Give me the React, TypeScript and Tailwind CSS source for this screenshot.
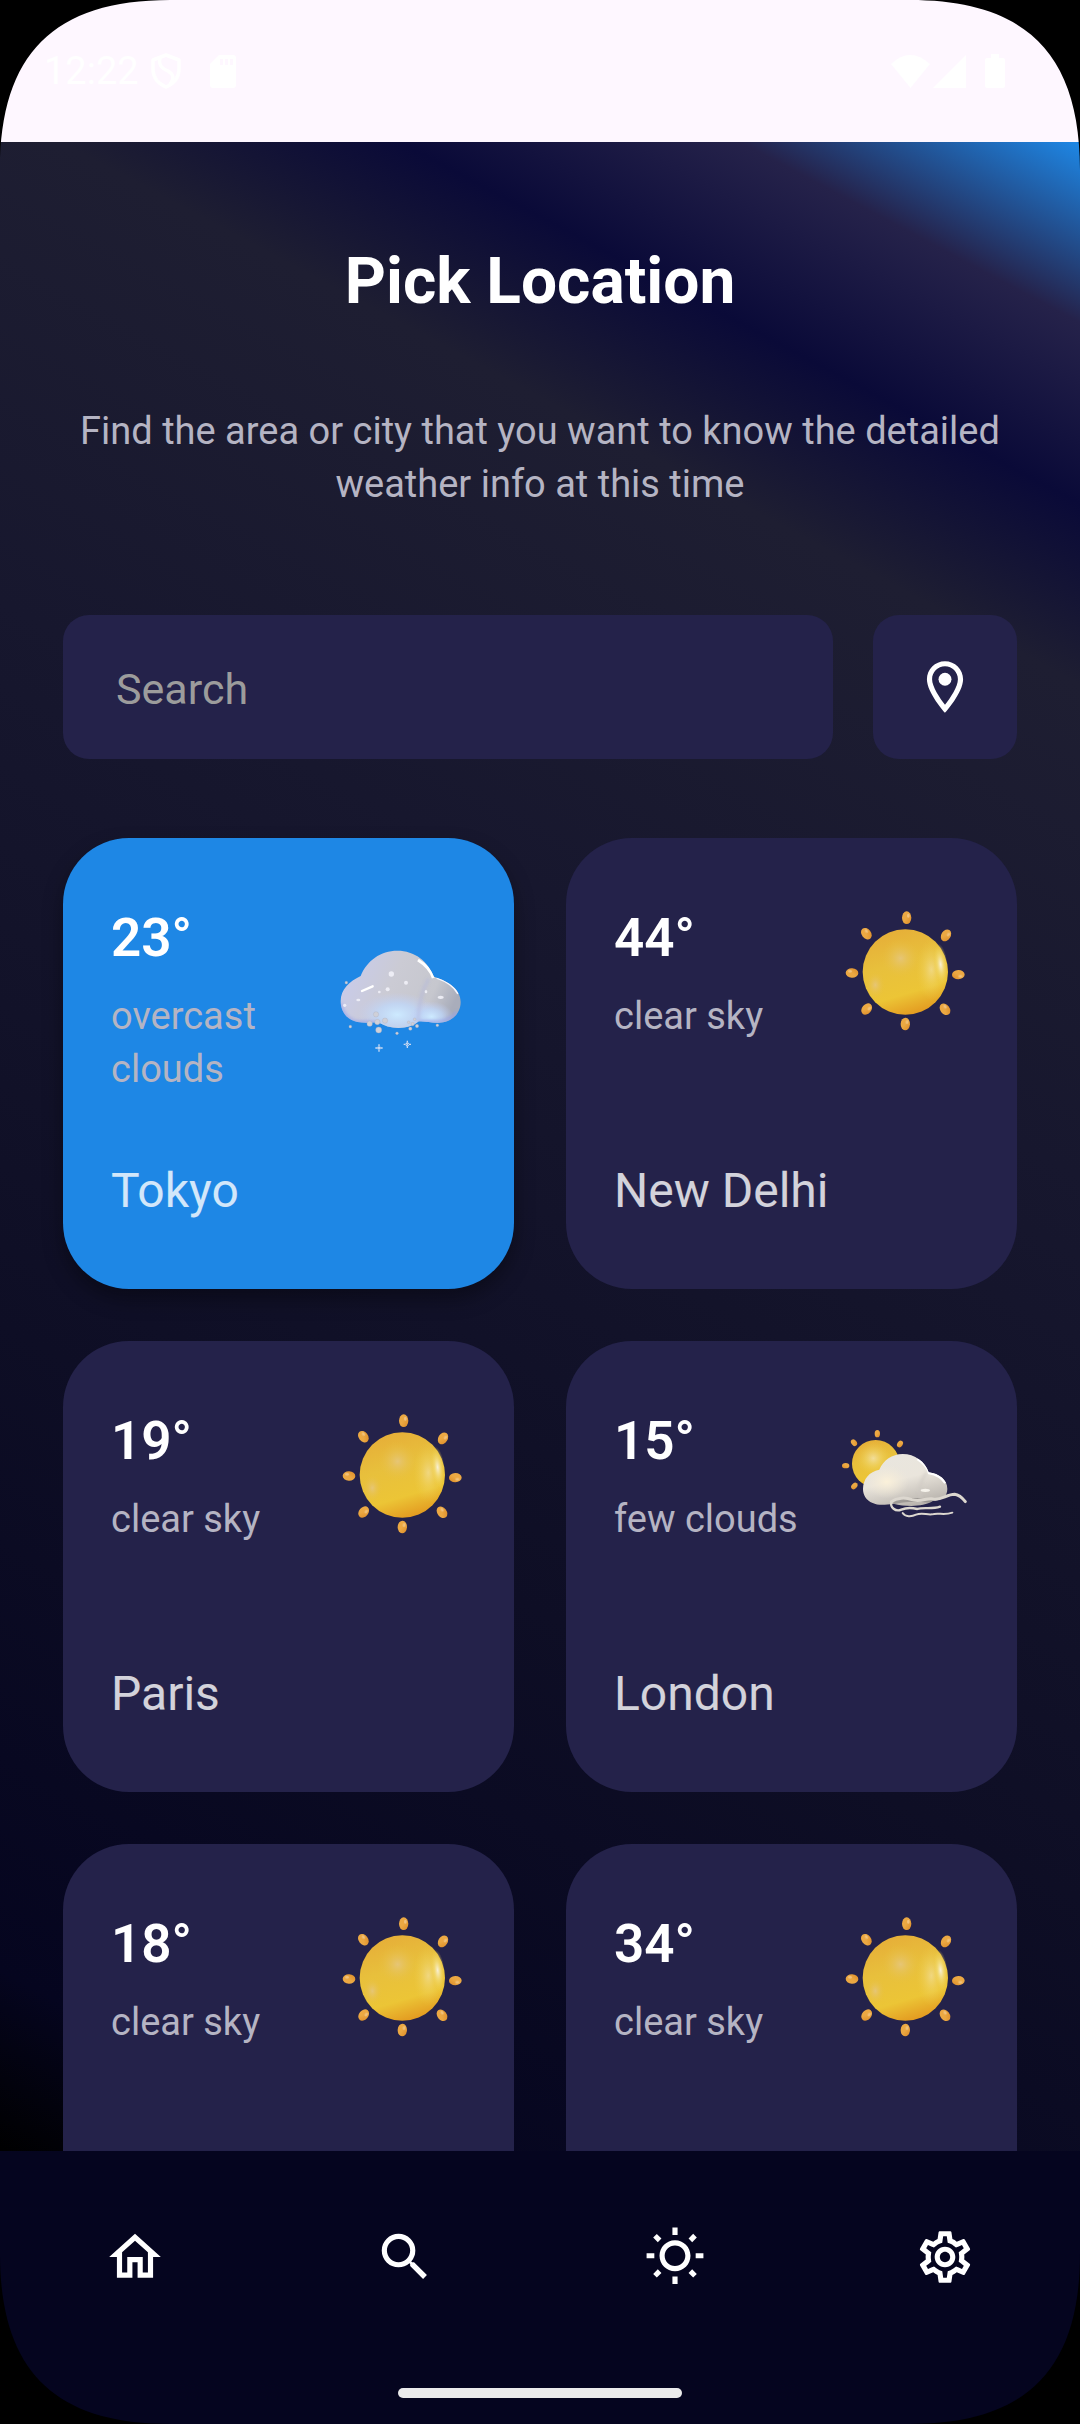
import React, { useState } from "react";
import {
  MdOutlineHome,
  MdOutlineLocationOn,
  MdOutlineSettings,
  MdOutlineWbSunny,
  MdSearch,
} from "react-icons/md";

type Sky = "snow" | "sun" | "partly";

interface Place {
  id: string;
  temp: string;
  summary: string;
  city: string;
  sky: Sky;
}

const places: Place[] = [
  { id: "tokyo", temp: "23°", summary: "overcast clouds", city: "Tokyo", sky: "snow" },
  { id: "delhi", temp: "44°", summary: "clear sky", city: "New Delhi", sky: "sun" },
  { id: "paris", temp: "19°", summary: "clear sky", city: "Paris", sky: "sun" },
  { id: "london", temp: "15°", summary: "few clouds", city: "London", sky: "partly" },
  { id: "fifth", temp: "18°", summary: "clear sky", city: "", sky: "sun" },
  { id: "sixth", temp: "34°", summary: "clear sky", city: "", sky: "sun" },
];

function GradientDefs() {
  return (
    <svg className="absolute size-0" aria-hidden="true">
      <defs>
        <linearGradient id="sunBase" x1="0.3" y1="0" x2="0.6" y2="1">
          <stop offset="0" stopColor="#e6ae38" />
          <stop offset="0.4" stopColor="#e8c03c" />
          <stop offset="0.75" stopColor="#ecc536" />
          <stop offset="1" stopColor="#e39a20" />
        </linearGradient>
        <radialGradient id="sunShine">
          <stop offset="0" stopColor="#f8f0d6" />
          <stop offset="0.45" stopColor="#f3dc7a" stopOpacity="0.75" />
          <stop offset="1" stopColor="#efcf4a" stopOpacity="0" />
        </radialGradient>
        <radialGradient id="sunGlow">
          <stop offset="0" stopColor="#e6c67c" stopOpacity="0.9" />
          <stop offset="1" stopColor="#e8c03c" stopOpacity="0" />
        </radialGradient>
        <linearGradient id="ray" x1="0" y1="0" x2="1" y2="1">
          <stop offset="0" stopColor="#eda944" />
          <stop offset="0.5" stopColor="#eba842" />
          <stop offset="1" stopColor="#dc8a26" />
        </linearGradient>
        <linearGradient id="snowCloud" x1="0" y1="0.2" x2="1" y2="0.5">
          <stop offset="0" stopColor="#c8cbee" />
          <stop offset="0.45" stopColor="#cbcbd4" />
          <stop offset="0.8" stopColor="#c6c7ce" />
          <stop offset="1" stopColor="#a9adbb" />
        </linearGradient>
        <radialGradient id="snowGlow">
          <stop offset="0" stopColor="#cdeaff" />
          <stop offset="0.5" stopColor="#bfd8fb" stopOpacity="0.75" />
          <stop offset="1" stopColor="#c3cdf5" stopOpacity="0" />
        </radialGradient>
        <linearGradient id="palePuff" x1="0.2" y1="0" x2="0.6" y2="1">
          <stop offset="0" stopColor="#e9e6df" />
          <stop offset="0.5" stopColor="#eae5dc" />
          <stop offset="1" stopColor="#b9b4ae" />
        </linearGradient>
        <radialGradient id="paleWarm">
          <stop offset="0" stopColor="#fbf1da" />
          <stop offset="1" stopColor="#f2ead8" stopOpacity="0" />
        </radialGradient>
        <filter id="soften" x="-50%" y="-50%" width="200%" height="200%">
          <feGaussianBlur stdDeviation="2" />
        </filter>
        <filter id="diffuse" x="-100%" y="-100%" width="300%" height="300%">
          <feGaussianBlur stdDeviation="5" />
        </filter>
      </defs>
    </svg>
  );
}

const sunRays = [
  [230, 68, 0],
  [109, 116, -38],
  [348, 121, 32],
  [66, 234, -88],
  [385, 239, 88],
  [110, 342, 40],
  [345, 343, -38],
  [226, 387, 3],
];

function SunIcon() {
  return (
    <svg viewBox="27 39 390 390" className="size-[130px] shrink-0" aria-hidden="true">
      {sunRays.map(([x, y, angle]) => (
        <g key={`${x}-${y}`} transform={`translate(${x} ${y}) rotate(${angle})`}>
          <ellipse rx="14" ry="19" fill="url(#ray)" />
          <ellipse cx="5" cy="-6" rx="4" ry="6" fill="#f2c27c" filter="url(#soften)" />
        </g>
      ))}
      <circle cx="226" cy="231" r="128" fill="url(#sunBase)" />
      <ellipse cx="212" cy="190" rx="60" ry="60" fill="url(#sunGlow)" />
      <ellipse cx="136" cy="270" rx="30" ry="42" fill="url(#sunGlow)" />
      <ellipse cx="304" cy="224" rx="46" ry="92" fill="url(#sunShine)" opacity="0.45" />
      <ellipse cx="332" cy="208" rx="21" ry="62" fill="url(#sunShine)" transform="rotate(-6 332 208)" />
    </svg>
  );
}

const flakes = [
  [79, 188, 4],
  [168, 283, 8],
  [149, 311, 8],
  [172, 306, 8],
  [195, 302, 8],
  [176, 330, 9],
  [91, 320, 4],
  [231, 340, 4],
  [266, 307, 4],
  [278, 312, 5],
  [284, 298, 4],
  [271, 326, 5],
  [291, 318, 5],
  [352, 316, 4],
];

const sparkles = [
  [214, 162, 8, 8],
  [258, 188, 6, 6],
  [203, 208, 6, 6],
  [318, 215, 4, 5],
  [362, 232, 9, 5],
  [115, 240, 6, 4],
  [74, 256, 5, 5],
  [178, 216, 4, 4],
];

const snowCloudPath =
  "M122 168C140 122 182 92 232 92C284 92 324 124 342 170C388 184 422 208 422 246C422 282 394 308 354 308C330 308 312 302 296 304C268 330 206 330 176 306C154 308 134 310 112 306C82 300 62 276 62 244C62 208 88 184 122 168Z";

function SnowIcon() {
  return (
    <svg viewBox="48 -36 390 390" className="size-[130px] shrink-0 overflow-visible" aria-hidden="true">
      <path d={snowCloudPath} fill="url(#snowCloud)" />
      <clipPath id="snowClip">
        <path d={snowCloudPath} />
      </clipPath>
      <g clipPath="url(#snowClip)">
        <ellipse cx="232" cy="284" rx="120" ry="66" fill="url(#snowGlow)" />
        <ellipse cx="334" cy="290" rx="66" ry="46" fill="url(#snowGlow)" />
        <path d="M62 250C66 284 90 304 116 306L176 308M296 306C330 304 380 316 412 276" fill="none" stroke="#97a3ea" strokeWidth="10" opacity="0.7" filter="url(#diffuse)" />
        <path d="M326 176C306 210 296 250 294 304" fill="none" stroke="#b3b7dc" strokeWidth="10" opacity="0.5" filter="url(#diffuse)" />
        <path d="M294 120C320 136 334 156 340 174" fill="none" stroke="#ffffff" strokeWidth="9" filter="url(#soften)" />
        <path d="M350 174C380 184 402 198 414 222" fill="none" stroke="#f6f7ff" strokeWidth="5" filter="url(#soften)" />
        <path d="M126 213L158 199" stroke="#ffffff" strokeWidth="7" strokeLinecap="round" filter="url(#soften)" />
      </g>
      {sparkles.map(([x, y, rx, ry]) => (
        <ellipse key={`${x}-${y}`} cx={x} cy={y} rx={rx} ry={ry} fill="#f4f4fb" opacity="0.85" filter="url(#soften)" />
      ))}
      {flakes.map(([x, y, r]) => (
        <circle key={`${x}-${y}`} cx={x} cy={y} r={r} fill="#cfd0d8" stroke="#a9adc0" strokeWidth="1" />
      ))}
      {[
        [177, 384],
        [262, 373],
      ].map(([x, y]) => (
        <path
          key={x}
          d={`M${x} ${y - 11}v6M${x} ${y + 5}v6M${x - 11} ${y}h6M${x + 5} ${y}h6M${x - 4} ${y - 4}l8 8M${x + 4} ${y - 4}l-8 8`}
          stroke="#c9d9f2"
          strokeWidth="4"
        />
      ))}
    </svg>
  );
}

const partlyRays = [
  [142, 56, 0],
  [72, 83, -38],
  [210, 87, 32],
  [47, 152, 90],
  [73, 213, 42],
];

const puffPath =
  "M148 164C160 136 186 117 218 117C254 117 286 140 296 172C328 176 352 194 352 222C352 246 334 256 308 258C280 276 230 276 190 266C166 270 144 272 128 264C108 256 99 240 99 222C99 192 118 170 148 164Z";

function PartlyIcon() {
  return (
    <svg viewBox="27 -12 390 390" className="size-[130px] shrink-0" aria-hidden="true">
      {partlyRays.map(([x, y, angle]) => (
        <ellipse key={`${x}-${y}`} rx="8" ry="11" fill="url(#ray)" transform={`translate(${x} ${y}) rotate(${angle})`} />
      ))}
      <circle cx="137" cy="146" r="71" fill="url(#sunBase)" />
      <ellipse cx="130" cy="130" rx="52" ry="50" fill="url(#sunShine)" opacity="0.6" />
      <path d={puffPath} fill="url(#palePuff)" />
      <clipPath id="puffClip">
        <path d={puffPath} />
      </clipPath>
      <g clipPath="url(#puffClip)">
        <ellipse cx="170" cy="200" rx="66" ry="50" fill="url(#paleWarm)" />
        <path d="M290 172C272 196 266 220 272 262" fill="none" stroke="#cdc8c2" strokeWidth="8" opacity="0.6" filter="url(#diffuse)" />
        <path d="M262 132C284 146 294 162 297 174Q330 180 346 204" fill="none" stroke="#ffffff" strokeWidth="7" filter="url(#soften)" />
        <path d="M190 262Q240 246 340 262" fill="none" stroke="#8f8a88" strokeWidth="12" opacity="0.7" filter="url(#soften)" />
        <ellipse cx="286" cy="226" rx="14" ry="5" fill="#f6f3ec" filter="url(#soften)" />
      </g>
      <g fill="none" stroke="#dcd7cf" strokeLinecap="round" strokeLinejoin="round">
        <path d="M184 260C200 248 226 246 246 254C272 262 290 248 310 252C334 256 350 238 374 238C390 240 398 250 406 260" strokeWidth="9" />
        <path d="M184 262C180 276 196 292 214 284C232 276 246 278 262 282C280 276 306 284 330 275" strokeWidth="7" />
        <path d="M218 294C226 306 244 306 258 299C276 292 290 300 306 298C326 292 340 302 367 293" strokeWidth="6" />
      </g>
    </svg>
  );
}

function SkyIcon({ sky }: { sky: Sky }) {
  if (sky === "snow") return <SnowIcon />;
  if (sky === "partly") return <PartlyIcon />;
  return <SunIcon />;
}

function PlaceCard({ place, active, onSelect }: { place: Place; active: boolean; onSelect: () => void }) {
  return (
    <button
      type="button"
      aria-pressed={active}
      onClick={onSelect}
      className={`flex aspect-square flex-col justify-between rounded-[66px] px-12 py-[70px] text-left ${
        active ? "bg-[#1e87e5] shadow-[0_10px_20px_rgba(0,0,0,0.35)]" : "bg-[#24224a]"
      }`}
    >
      <span className="flex w-full items-start justify-between">
        <span className="flex flex-col gap-[22px]">
          <span className="text-[53px] leading-[60px] font-semibold text-white">{place.temp}</span>
          <span className="text-[38px] leading-[53px] text-[#b5b4c3]">{place.summary}</span>
        </span>
        <SkyIcon sky={place.sky} />
      </span>
      <span className="text-[48px] leading-[56px] text-white/80">{place.city}</span>
    </button>
  );
}

function StatusBar() {
  return (
    <header className="flex h-[142px] shrink-0 items-center justify-between bg-[#fef7ff] pr-[75px] pl-11 text-white">
      <div className="flex items-center">
        <span className="text-[38px] leading-[44px]">12:22</span>
        <svg viewBox="0 0 30 36" className="ml-3 h-9 w-[30px]" fill="none" stroke="currentColor" strokeWidth="3.5" aria-hidden="true">
          <path d="M15 2L28 7V16C28 25 22 31 15 34C8 31 2 25 2 16V7Z" strokeLinejoin="round" />
          <path d="M9 5C7 13 12 16 17 18C22 21 24 25 19 31" />
        </svg>
        <svg viewBox="0 0 26 33" className="ml-[29px] h-[33px] w-[26px]" aria-hidden="true">
          <path d="M9 0H23Q26 0 26 3V30Q26 33 23 33H3Q0 33 0 30V9Z" fill="currentColor" />
          <path d="M10 4h3v6h-3zM15 4h3v6h-3zM20 4h3v6h-3z" fill="#fef7ff" />
        </svg>
      </div>
      <div className="flex items-center">
        <svg viewBox="0 0 39 33" className="h-[33px] w-[39px]" fill="currentColor" aria-hidden="true">
          <path d="M0 9Q19 -9 39 9L19.500 33Z" />
        </svg>
        <svg viewBox="0 0 33 33" className="ml-[3px] size-[33px]" fill="currentColor" aria-hidden="true">
          <path d="M33 0V33H0Z" />
        </svg>
        <svg viewBox="0 0 20 34" className="ml-[19px] h-[34px] w-5" fill="currentColor" aria-hidden="true">
          <path d="M6 0H14V4H18Q20 4 20 6V32Q20 34 18 34H2Q0 34 0 32V6Q0 4 2 4H6Z" />
        </svg>
      </div>
    </header>
  );
}

function ScreenCorner({ className }: { className: string }) {
  return (
    <svg viewBox="0 0 170 170" className={`pointer-events-none absolute size-[170px] ${className}`} aria-hidden="true">
      <path d="M0 0H170C54 0 0 54 0 170Z" fill="#000000" />
    </svg>
  );
}

const tabs = [
  { label: "Home", Icon: MdOutlineHome },
  { label: "Search", Icon: MdSearch },
  { label: "Weather", Icon: MdOutlineWbSunny },
  { label: "Settings", Icon: MdOutlineSettings },
];

export default function App() {
  const [selected, setSelected] = useState("tokyo");
  const [query, setQuery] = useState("");

  return (
    <div className="relative flex h-screen flex-col overflow-hidden bg-black font-[Roboto,sans-serif]">
      <GradientDefs />
      <StatusBar />

      <main className="min-h-0 flex-1 overflow-y-auto bg-[linear-gradient(208deg,#1e87e5_0%,#25224a_7%,#0a0a38_14%,#1e1e32_21%,#17172e_40%,#0e0e25_68%,#05051f_93%,#000000_100%)] px-[63px] pt-[102px] pb-12 [scrollbar-width:none]">
        <h1 className="text-center text-[64px] leading-[76px] font-bold text-white">Pick Location</h1>
        <p className="mt-[85px] text-center text-[38px] leading-[53px] text-[#b5b4c3]">
          Find the area or city that you want to know the detailed weather info at this time
        </p>

        <div className="mt-[104px] flex gap-10">
          <input
            type="text"
            aria-label="Search"
            placeholder="Search"
            value={query}
            onChange={(e) => setQuery(e.target.value)}
            className="h-36 min-w-0 flex-1 rounded-[26px] bg-[#24224a] px-[53px] pt-1 text-[43px] text-white outline-none placeholder:text-[#9c9c9c]"
          />
          <button
            type="button"
            aria-label="Use current location"
            className="flex size-36 shrink-0 items-center justify-center rounded-[26px] bg-[#24224a] text-white"
          >
            <MdOutlineLocationOn className="size-[62px]" />
          </button>
        </div>

        <div className="mt-[79px] grid grid-cols-2 gap-[52px]">
          {places.map((place) => (
            <PlaceCard
              key={place.id}
              place={place}
              active={place.id === selected}
              onSelect={() => setSelected(place.id)}
            />
          ))}
        </div>
      </main>

      <footer className="flex shrink-0 flex-col items-center bg-[#05051f] pb-[26px]">
        <nav className="grid w-full grid-cols-4 pt-[75px] text-white">
          {tabs.map(({ label, Icon }) => (
            <button key={label} type="button" aria-label={label} className="flex justify-center">
              <Icon className="size-[62px]" />
            </button>
          ))}
        </nav>
        <div className="mt-[100px] h-[10px] w-[284px] rounded-full bg-[#ebebeb]" />
      </footer>

      <ScreenCorner className="top-0 left-0" />
      <ScreenCorner className="top-0 right-0 rotate-90" />
      <ScreenCorner className="right-0 bottom-0 rotate-180" />
      <ScreenCorner className="bottom-0 left-0 -rotate-90" />
    </div>
  );
}
